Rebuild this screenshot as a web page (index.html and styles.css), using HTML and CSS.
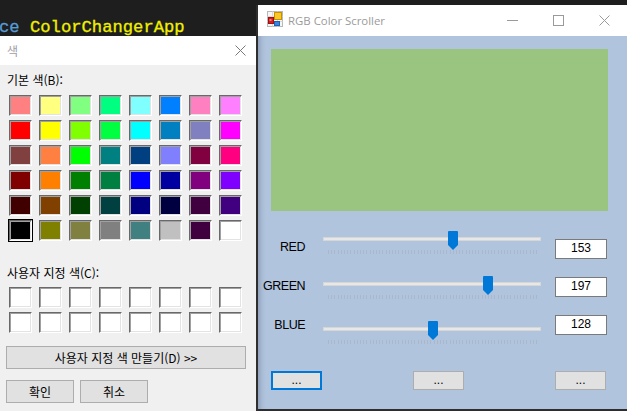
FILE: index.html
```html
<!DOCTYPE html>
<html lang="ko">
<head>
<meta charset="utf-8">
<title>RGB Color Scroller</title>
<link rel="stylesheet" href="styles.css">
</head>
<body>
<div class="editor">
  <div class="code-line"><span class="kw">ce</span> <span class="ns">ColorChangerApp</span></div>
</div>

<div class="win dlg">
  <div class="dlg-title">
    <span class="dlg-caption">색</span>
    <svg class="dlg-close" width="11" height="11" viewBox="0 0 11 11"><path d="M0.5 0.5L10.5 10.5M10.5 0.5L0.5 10.5" stroke="#7a7a7a" stroke-width="1" fill="none"/></svg>
  </div>
  <div class="dlg-body">
    <div class="dlg-label">기본 색(B):</div>
    <div class="swatches basic">
      <span class="sw" style="background:#ff8080"></span><span class="sw" style="background:#ffff80"></span><span class="sw" style="background:#80ff80"></span><span class="sw" style="background:#00ff80"></span><span class="sw" style="background:#80ffff"></span><span class="sw" style="background:#0080ff"></span><span class="sw" style="background:#ff80c0"></span><span class="sw" style="background:#ff80ff"></span>
      <span class="sw" style="background:#ff0000"></span><span class="sw" style="background:#ffff00"></span><span class="sw" style="background:#80ff00"></span><span class="sw" style="background:#00ff40"></span><span class="sw" style="background:#00ffff"></span><span class="sw" style="background:#0080c0"></span><span class="sw" style="background:#8080c0"></span><span class="sw" style="background:#ff00ff"></span>
      <span class="sw" style="background:#804040"></span><span class="sw" style="background:#ff8040"></span><span class="sw" style="background:#00ff00"></span><span class="sw" style="background:#008080"></span><span class="sw" style="background:#004080"></span><span class="sw" style="background:#8080ff"></span><span class="sw" style="background:#800040"></span><span class="sw" style="background:#ff0080"></span>
      <span class="sw" style="background:#800000"></span><span class="sw" style="background:#ff8000"></span><span class="sw" style="background:#008000"></span><span class="sw" style="background:#008040"></span><span class="sw" style="background:#0000ff"></span><span class="sw" style="background:#0000a0"></span><span class="sw" style="background:#800080"></span><span class="sw" style="background:#8000ff"></span>
      <span class="sw" style="background:#400000"></span><span class="sw" style="background:#804000"></span><span class="sw" style="background:#004000"></span><span class="sw" style="background:#004040"></span><span class="sw" style="background:#000080"></span><span class="sw" style="background:#000040"></span><span class="sw" style="background:#400040"></span><span class="sw" style="background:#400080"></span>
      <span class="sw selected" style="background:#000000"></span><span class="sw" style="background:#808000"></span><span class="sw" style="background:#808040"></span><span class="sw" style="background:#808080"></span><span class="sw" style="background:#408080"></span><span class="sw" style="background:#c0c0c0"></span><span class="sw" style="background:#400040"></span><span class="sw" style="background:#ffffff"></span>
    </div>
    <div class="dlg-label custom-label">사용자 지정 색(C):</div>
    <div class="swatches custom">
      <span class="sw"></span><span class="sw"></span><span class="sw"></span><span class="sw"></span><span class="sw"></span><span class="sw"></span><span class="sw"></span><span class="sw"></span>
      <span class="sw"></span><span class="sw"></span><span class="sw"></span><span class="sw"></span><span class="sw"></span><span class="sw"></span><span class="sw"></span><span class="sw"></span>
    </div>
    <button class="wbtn wide">사용자 지정 색 만들기(D) &gt;&gt;</button>
    <div class="dlg-actions">
      <button class="wbtn small">확인</button>
      <button class="wbtn small">취소</button>
    </div>
  </div>
</div>

<div class="win rgb">
  <div class="rgb-title">
    <svg class="app-icon" width="16" height="16" viewBox="0 0 16 16">
      <rect x="0.5" y="0.5" width="15" height="15" fill="#f6f6f6" stroke="#b8b8b8"/>
      <path d="M0.5 5.5H15.5M0.5 10.5H15.5M5.5 0.5V15.5M10.5 0.5V15.5" stroke="#d8d8d8" fill="none"/>
      <rect x="1.5" y="6.5" width="5" height="6" fill="#d02020" stroke="#a01010"/>
      <rect x="2.5" y="8" width="2" height="2" fill="#f08080"/>
      <rect x="7.5" y="1.5" width="7" height="7" fill="#f8c828" stroke="#c89000"/>
      <rect x="7.5" y="10.5" width="5" height="4" fill="#3c82e0" stroke="#2060b0"/>
    </svg>
    <span class="rgb-caption">RGB Color Scroller</span>
    <div class="caption-btns">
      <span class="cbtn"><svg width="11" height="11" viewBox="0 0 11 11"><path d="M0 5.5H11" stroke="#9a9a9a" fill="none"/></svg></span>
      <span class="cbtn"><svg width="11" height="11" viewBox="0 0 11 11"><rect x="0.5" y="0.5" width="10" height="10" stroke="#9a9a9a" fill="none"/></svg></span>
      <span class="cbtn"><svg width="11" height="11" viewBox="0 0 11 11"><path d="M0.5 0.5L10.5 10.5M10.5 0.5L0.5 10.5" stroke="#9a9a9a" fill="none"/></svg></span>
    </div>
  </div>
  <div class="rgb-client">
    <div class="preview"></div>
    <div class="controls">
      <div class="labels">
        <span class="lbl">RED</span>
        <span class="lbl">GREEN</span>
        <span class="lbl">BLUE</span>
      </div>
      <div class="sliders">
        <div class="slider"><div class="track"></div><div class="ticks"></div>
          <svg class="thumb" style="left:125px" width="10" height="19" viewBox="0 0 10 19"><path d="M0 1Q0 0 1 0H9Q10 0 10 1V14L5 19L0 14Z" fill="#0078d7"/></svg></div>
        <div class="slider"><div class="track"></div><div class="ticks"></div>
          <svg class="thumb" style="left:160px" width="10" height="19" viewBox="0 0 10 19"><path d="M0 1Q0 0 1 0H9Q10 0 10 1V14L5 19L0 14Z" fill="#0078d7"/></svg></div>
        <div class="slider"><div class="track"></div><div class="ticks"></div>
          <svg class="thumb" style="left:105px" width="10" height="19" viewBox="0 0 10 19"><path d="M0 1Q0 0 1 0H9Q10 0 10 1V14L5 19L0 14Z" fill="#0078d7"/></svg></div>
      </div>
      <div class="values">
        <div class="val">153</div>
        <div class="val">197</div>
        <div class="val">128</div>
      </div>
    </div>
    <div class="bottom-btns">
      <button class="fbtn focused">...</button>
      <button class="fbtn">...</button>
      <button class="fbtn">...</button>
    </div>
  </div>
</div>
</body>
</html>
```

FILE: styles.css
```css
html, body {
  margin: 0;
  padding: 0;
}
body {
  width: 627px;
  height: 411px;
  overflow: hidden;
  background: #1e1e1e;
  position: relative;
}

.editor {
  padding-top: 18px;
}
.code-line {
  font-family: "Liberation Mono", "DejaVu Sans Mono", monospace;
  font-size: 17.2px;
  line-height: 20px;
  white-space: pre;
  margin-left: -1px;
  -webkit-text-stroke: 0.3px currentColor;
}
.kw { color: #569cd6; }
.ns { color: #f0f000; }

.win {
  position: absolute;
  box-sizing: border-box;
}

/* ---------- color dialog ---------- */
.dlg {
  left: 0;
  top: 36px;
  width: 256px;
  height: 375px;
  display: flex;
  flex-direction: column;
  font-family: "Noto Sans CJK KR", "Noto Sans", sans-serif;
  font-size: 12px;
}
.dlg-title {
  height: 29px;
  background: #ffffff;
  display: flex;
  align-items: center;
  padding-left: 7px;
  flex: none;
}
.dlg-caption {
  color: #a0a0a8;
  line-height: 16px;
}
.dlg-close {
  margin-left: auto;
  margin-right: 10px;
}
.dlg-body {
  flex: 1;
  background: #f0f0f0;
  display: flex;
  flex-direction: column;
  align-items: flex-start;
}
.dlg-label {
  margin: 7px 0 0 7px;
  line-height: 16px;
  height: 16px;
  color: #000;
}
.custom-label {
  margin-top: 24px;
}
.swatches {
  display: grid;
  grid-template-columns: repeat(8, 23px);
  grid-auto-rows: 21px;
  column-gap: 7px;
  row-gap: 4px;
  margin-left: 9px;
  margin-top: 7px;
}
.custom {
  margin-top: 6px;
}
.sw {
  box-sizing: border-box;
  display: block;
  background: #ffffff;
  border-top: 1px solid #696969;
  border-left: 1px solid #696969;
  border-right: 1px solid #ffffff;
  border-bottom: 1px solid #ffffff;
  box-shadow: inset 1px 1px 0 #a0a0a0, inset -1px -1px 0 #e3e3e3;
}
.sw.selected {
  outline: 1px solid #000;
  outline-offset: 0;
}
.wbtn {
  box-sizing: border-box;
  background: #e1e1e1;
  border: 1px solid #adadad;
  font-family: "Noto Sans CJK KR", "Noto Sans", sans-serif;
  font-size: 12px;
  color: #000;
  height: 23px;
  padding: 0;
  line-height: 19px;
  border-radius: 0;
}
.wide {
  width: 240px;
  margin: 13px 0 0 6px;
}
.dlg-actions {
  display: flex;
  gap: 6px;
  margin: 11px 0 0 6px;
}
.small {
  width: 68px;
}

/* ---------- RGB window ---------- */
.rgb {
  left: 256px;
  top: 5px;
  width: 371px;
  height: 406px;
  border-left: 2px solid #2e2e2e;
  border-bottom: 2px solid #2e2e2e;
  display: flex;
  flex-direction: column;
}
.rgb-title {
  height: 31px;
  background: #ffffff;
  display: flex;
  align-items: center;
  flex: none;
}
.app-icon {
  margin-left: 9px;
  margin-top: -3px;
}
.rgb-caption {
  margin-left: 5px;
  font-family: "Open Sans", "Noto Sans", sans-serif;
  font-size: 11.4px;
  color: #9a9a9a;
}
.caption-btns {
  margin-left: auto;
  display: flex;
  height: 31px;
}
.cbtn {
  width: 46px;
  height: 31px;
  display: flex;
  align-items: center;
  justify-content: center;
}
.rgb-client {
  flex: 1;
  background: #b0c4de;
  display: flex;
  flex-direction: column;
  box-shadow: inset 7px 0 6px -6px rgba(40, 50, 70, 0.35);
}
.preview {
  margin: 13px 0 0 13px;
  width: 337px;
  height: 162px;
  background: #99c580;
}
.controls {
  height: 160px;
  display: flex;
  align-items: flex-start;
}
.labels {
  width: 47px;
  display: flex;
  flex-direction: column;
  align-items: flex-end;
  gap: 25px;
  padding-top: 29px;
}
.lbl {
  font-family: "Liberation Sans", Arial, sans-serif;
  font-size: 12.5px;
  letter-spacing: -0.5px;
  line-height: 14px;
  height: 14px;
  color: #000;
}
.sliders {
  margin-left: 18px;
  width: 218px;
  padding-top: 14px;
  display: flex;
  flex-direction: column;
}
.slider {
  position: relative;
  height: 45px;
}
.track {
  margin-top: 12px;
  height: 4px;
  background: #e7e7e7;
  box-shadow: inset 0 0 0 1px #d6d6d6;
}
.ticks {
  margin: 9px 4px 0 5px;
  height: 4px;
  background: repeating-linear-gradient(to right, rgba(160, 160, 160, 0.35) 0 1px, transparent 1px 3.2px);
}
.thumb {
  position: absolute;
  top: 6px;
  display: block;
}
.values {
  margin-left: 14px;
  width: 52px;
  padding-top: 28px;
  display: flex;
  flex-direction: column;
  gap: 18px;
}
.val {
  box-sizing: border-box;
  height: 20px;
  background: #ffffff;
  border: 1px solid #7a7a7a;
  font-family: "Liberation Sans", Arial, sans-serif;
  font-size: 12px;
  line-height: 16px;
  text-align: center;
  color: #000;
}
.bottom-btns {
  display: flex;
  gap: 91px;
  padding-left: 13px;
}
.fbtn {
  box-sizing: border-box;
  width: 51px;
  height: 19px;
  padding: 0;
  background: #e1e1e1;
  border: 1px solid #adadad;
  border-radius: 0;
  font-family: "Liberation Sans", Arial, sans-serif;
  font-size: 12px;
  line-height: 15px;
  color: #000;
}
.fbtn.focused {
  border: 2px solid #0078d7;
}
```
